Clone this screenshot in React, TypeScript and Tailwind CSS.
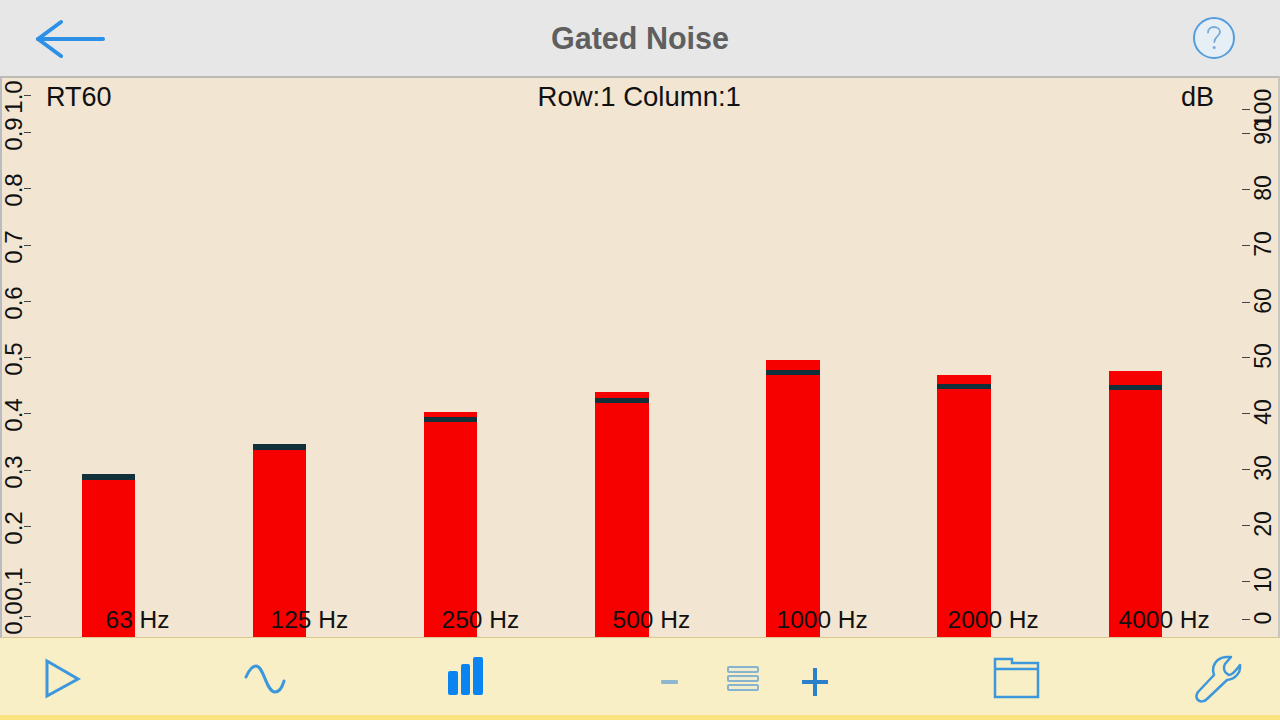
const font = "font-['Liberation_Sans',Arial,sans-serif]"

const bars = [
  { label: '63 Hz', top: 474, mark: 474, markH: 6, textLeft: 105.5 },
  { label: '125 Hz', top: 445, mark: 444, markH: 6, textLeft: 270.5 },
  { label: '250 Hz', top: 412, mark: 417, markH: 5, textLeft: 441.5 },
  { label: '500 Hz', top: 392, mark: 398, markH: 5, textLeft: 612.5 },
  { label: '1000 Hz', top: 360, mark: 370, markH: 5, textLeft: 776.5 },
  { label: '2000 Hz', top: 375, mark: 384, markH: 5, textLeft: 947.5 },
  { label: '4000 Hz', top: 371, mark: 385, markH: 5, textLeft: 1118.5 },
]

// tick y in page pixels, the first and last sit clamped inside the plot
const leftTicks = [
  { t: '1.0', y: 95 },
  { t: '0.9', y: 132 },
  { t: '0.8', y: 188 },
  { t: '0.7', y: 245 },
  { t: '0.6', y: 301 },
  { t: '0.5', y: 357 },
  { t: '0.4', y: 413 },
  { t: '0.3', y: 470 },
  { t: '0.2', y: 526 },
  { t: '0.1', y: 582 },
  { t: '0.0', y: 616 },
]

const rightTicks = [
  { t: '100', y: 109 },
  { t: '90', y: 133 },
  { t: '80', y: 189 },
  { t: '70', y: 245 },
  { t: '60', y: 302 },
  { t: '50', y: 357 },
  { t: '40', y: 413 },
  { t: '30', y: 469 },
  { t: '20', y: 525 },
  { t: '10', y: 581 },
  { t: '0', y: 619 },
]

const PLOT_TOP = 78
const PLOT_BOTTOM = 637

function Bar({ top, mark, markH }: { top: number; mark: number; markH: number }) {
  return (
    <div className="w-[53.6px] bg-[#f70000] relative" style={{ height: PLOT_BOTTOM - top }}>
      <div
        className="absolute left-0 right-0 bg-[#12303a]"
        style={{ top: mark - top, height: markH }}
      />
    </div>
  )
}

export default function App() {
  return (
    <div className={`w-[1280px] h-[720px] flex flex-col overflow-hidden bg-[#f9e27f] ${font}`}>
      {/* Header */}
      <div className="h-[76px] shrink-0 bg-[#e7e7e7] grid grid-cols-[1fr_auto_1fr] items-center px-[44px]">
        <svg className="-ml-[8px]" width="70" height="40" viewBox="0 0 70 40" fill="none" stroke="#2b90e6" strokeWidth="4" strokeLinecap="round" strokeLinejoin="round">
          <path d="M2 21H67" />
          <path d="M25 4L2 21L25 38" />
        </svg>
        <div className="text-[30.5px] font-bold text-[#5f5f5f] leading-none">Gated Noise</div>
        <svg className="justify-self-end" width="44" height="44" viewBox="0 0 44 44" fill="none">
          <circle cx="22" cy="22" r="20" fill="#e6eff6" stroke="#559ddd" strokeWidth="2" />
          <path d="M16 16.5c0-3.5 2.8-5.5 6-5.5s6 2 6 5c0 4-5.5 4.5-5.7 10" stroke="#7aa9d8" strokeWidth="1.8" strokeLinecap="round" />
          <circle cx="22.2" cy="31.5" r="1.5" fill="#7aa9d8" />
        </svg>
      </div>

      {/* Chart */}
      <div className="relative h-[562px] shrink-0 bg-[#f2e5d2] border-t-2 border-t-[#bdbbb6] border-l-2 border-l-[#b9bcc0] border-b border-b-[#d9c88f] border-r-2 border-r-[#c9c6bf]">
        <div className="absolute left-[44px] right-[64px] top-[2px] flex items-center justify-between text-[27px] leading-[34px] text-[#111]">
          <span>RT60</span>
          <span className="-ml-[14px] text-[27.5px]">Row:1 Column:1</span>
          <span>dB</span>
        </div>

        {leftTicks.map(({ t, y }) => (
          <div key={t}>
            <div
              className="absolute left-[-28px] w-[80px] text-center text-[24px] leading-[28px] text-[#111] -rotate-90"
              style={{ top: y + 2 - 14 - PLOT_TOP }}
            >
              {t}
            </div>
            <div className="absolute left-[22px] w-[7px] h-[1px] bg-[#444]" style={{ top: y - PLOT_TOP }} />
          </div>
        ))}

        {rightTicks.map(({ t, y }) => (
          <div key={t}>
            <div
              className="absolute left-[1221px] w-[80px] text-center text-[23px] leading-[28px] text-[#111] -rotate-90"
              style={{ top: y - 1 - 14 - PLOT_TOP }}
            >
              {t}
            </div>
            <div className="absolute left-[1240px] w-[8px] h-[1px] bg-[#444]" style={{ top: y - PLOT_TOP }} />
          </div>
        ))}

        <div className="absolute left-[79.5px] bottom-0 flex items-end gap-[117.6px]">
          {bars.map((b) => (
            <Bar key={b.label} top={b.top} mark={b.mark} markH={b.markH} />
          ))}
        </div>

        {bars.map((b) => (
          <div
            key={b.label}
            className="absolute bottom-[2px] text-[24.5px] leading-[30px] text-[#111] whitespace-nowrap"
            style={{ left: b.textLeft - 2 }}
          >
            {b.label}
          </div>
        ))}
      </div>

      {/* Toolbar */}
      <div className="relative h-[77px] shrink-0 bg-[#f9efc6]">
        <svg className="absolute left-[44px] top-[20px]" width="38" height="42" viewBox="0 0 38 42" fill="none" stroke="#3d97dc" strokeWidth="3">
          <path d="M3 3L34 21L3 38Z" />
        </svg>
        <svg className="absolute left-[243px] top-[25px]" width="44" height="32" viewBox="0 0 44 32" fill="none" stroke="#3d97dc" strokeWidth="3" strokeLinecap="round">
          <path d="M3 14C6 7 9 3 13 3C21 3 23 29 32 29C36 29 39 25 41 18" />
        </svg>
        <div className="absolute left-[448px] top-[19px] flex items-end gap-[3px] h-[38px]">
          <div className="w-[9.5px] h-[24px] rounded-[2px] bg-[#0a84f0]" />
          <div className="w-[9.5px] h-[31px] rounded-[2px] bg-[#0a84f0]" />
          <div className="w-[9.5px] h-[38px] rounded-[2px] bg-[#0a84f0]" />
        </div>
        <div className="absolute left-[661px] top-[42px] w-[17px] h-[4px] rounded-[1px] bg-[#8fb6cf]" />
        <div className="absolute left-[727px] top-[28px] flex flex-col gap-[2px]">
          <div className="w-[32px] h-[7px] rounded-[2px] border-2 border-[#87b3cc] bg-[#f0ecd0]" />
          <div className="w-[32px] h-[7px] rounded-[2px] border-2 border-[#87b3cc] bg-[#f0ecd0]" />
          <div className="w-[32px] h-[7px] rounded-[2px] border-2 border-[#87b3cc] bg-[#f0ecd0]" />
        </div>
        <svg className="absolute left-[802px] top-[30px]" width="26" height="28" viewBox="0 0 26 28" fill="none" stroke="#2b80cc" strokeWidth="4">
          <path d="M0 14H26" />
          <path d="M13 0V28" />
        </svg>
        <svg className="absolute left-[993px] top-[19px]" width="47" height="42" viewBox="0 0 47 42" fill="none" stroke="#3d97dc" strokeWidth="2.5">
          <path d="M2 40V2H19V6H45V40Z" />
          <path d="M2 12H45" />
        </svg>
        <svg className="absolute left-[1194px] top-[17px]" width="48" height="48" viewBox="0 0 48 48" fill="none" stroke="#3d97dc" strokeWidth="2.5" strokeLinejoin="round">
          <path d="M4 37L20 20C17 11 22 3 32 2L37 2L31 9C29 13 30 18 35 20C38 20 41 17 46 10C47 17 42 24 33 25L13 44C10 47 6 47 4 45C2 43 2 40 4 37Z" />
        </svg>
      </div>
      <div className="flex-1 bg-[#f9e27f]" />
    </div>
  )
}
